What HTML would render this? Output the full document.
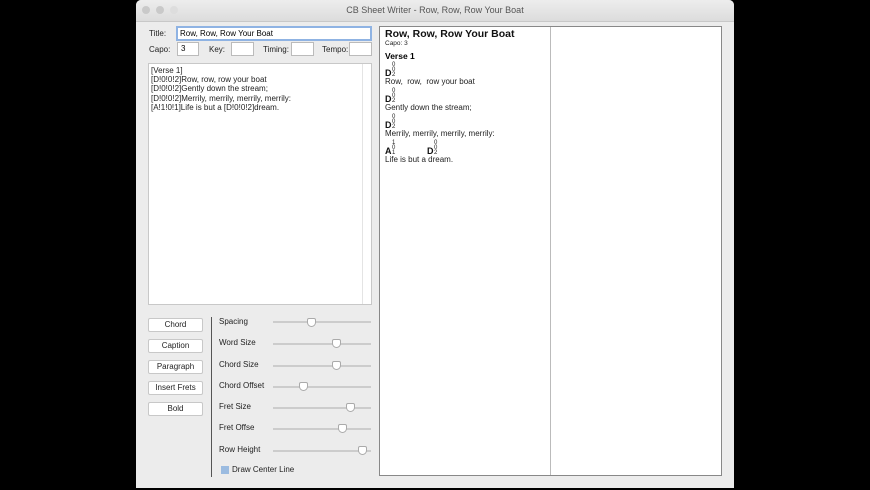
<!DOCTYPE html>
<html><head><style>
body{margin:0;width:870px;height:490px;background:#000;font-family:"Liberation Sans",sans-serif;position:relative;overflow:hidden}
.a{position:absolute}
.win{left:136px;top:0;width:598px;height:488px;background:#ececec;border-radius:5px 5px 0 0}
.tb{left:0;top:0;width:598px;height:21px;background:linear-gradient(#ededed,#dcdcdc);border-bottom:1px solid #c8c8c8;border-radius:5px 5px 0 0;font-size:9px;color:#555;text-align:center;line-height:21px}
.dot{width:8px;height:8px;border-radius:50%;background:#c9c9c9;top:6px}
.lb{font-size:8px;color:#222}
.in{background:#fff;border:1px solid #bbb;height:14px;box-sizing:border-box}
.btn{width:53px;height:12px;background:#fff;border:1px solid #c8c8c8;border-radius:2px;font-size:8px;text-align:center;line-height:12px;color:#222;left:148px}
.tr{height:2px;background:#ccc;left:273px;width:98px}
.th{width:9px;height:9px;background:#fff;border:1px solid #aaa;border-radius:2px 2px 50% 50%;box-sizing:border-box}
.p{font-size:8px;color:#222}
.s{font-size:6px;color:#222;line-height:5px}
.d{font-size:9px;font-weight:bold;color:#111}
</style></head><body>
<div class="a win">
<div class="a tb">CB Sheet Writer - Row, Row, Row Your Boat</div>
<div class="a dot" style="left:6px"></div><div class="a dot" style="left:20px"></div><div class="a dot" style="left:34px;background:#ddd"></div>
</div>
<div class="a lb" style="left:149px;top:29px">Title:</div>
<div class="a in" style="left:176px;top:26px;width:196px;height:15px;border:2px solid #8fb3e3;font-size:8px;padding-left:2px;line-height:11px">Row, Row, Row Your Boat</div>
<div class="a lb" style="left:149px;top:45px">Capo:</div>
<div class="a in" style="left:177px;top:42px;width:22px;font-size:8px;padding-left:3px;line-height:12px">3</div>
<div class="a lb" style="left:209px;top:45px">Key:</div>
<div class="a in" style="left:231px;top:42px;width:23px"></div>
<div class="a lb" style="left:263px;top:45px">Timing:</div>
<div class="a in" style="left:291px;top:42px;width:23px"></div>
<div class="a lb" style="left:322px;top:45px">Tempo:</div>
<div class="a in" style="left:349px;top:42px;width:23px"></div>
<div class="a" style="left:148px;top:63px;width:224px;height:242px;background:#fff;border:1px solid #c8c8c8;box-sizing:border-box"></div>
<div class="a" style="left:362px;top:64px;width:1px;height:240px;background:#e4e4e4"></div>
<div class="a p" style="left:151px;top:66px;line-height:9.2px">[Verse 1]<br>[D!0!0!2]Row, row, row your boat<br>[D!0!0!2]Gently down the stream;<br>[D!0!0!2]Merrily, merrily, merrily, merrily:<br>[A!1!0!1]Life is but a [D!0!0!2]dream.</div>
<div class="a btn" style="top:318px">Chord</div>
<div class="a btn" style="top:339px">Caption</div>
<div class="a btn" style="top:360px">Paragraph</div>
<div class="a btn" style="top:381px">Insert Frets</div>
<div class="a btn" style="top:402px">Bold</div>
<div class="a" style="left:211px;top:317px;width:1px;height:160px;background:#555"></div>
<div class="a lb" style="left:219px;top:317px">Spacing</div><div class="a tr" style="top:321px"></div><div class="a th" style="left:307px;top:318px"></div>
<div class="a lb" style="left:219px;top:338px">Word Size</div><div class="a tr" style="top:343px"></div><div class="a th" style="left:332px;top:339px"></div>
<div class="a lb" style="left:219px;top:360px">Chord Size</div><div class="a tr" style="top:365px"></div><div class="a th" style="left:332px;top:361px"></div>
<div class="a lb" style="left:219px;top:381px">Chord Offset</div><div class="a tr" style="top:386px"></div><div class="a th" style="left:299px;top:382px"></div>
<div class="a lb" style="left:219px;top:402px">Fret Size</div><div class="a tr" style="top:407px"></div><div class="a th" style="left:346px;top:403px"></div>
<div class="a lb" style="left:219px;top:423px">Fret Offse</div><div class="a tr" style="top:428px"></div><div class="a th" style="left:338px;top:424px"></div>
<div class="a lb" style="left:219px;top:445px">Row Height</div><div class="a tr" style="top:450px"></div><div class="a th" style="left:358px;top:446px"></div>
<div class="a" style="left:221px;top:466px;width:8px;height:8px;background:#9bbbe0"></div>
<div class="a lb" style="left:232px;top:465px">Draw Center Line</div>
<div class="a" style="left:379px;top:26px;width:343px;height:450px;background:#fff;border:1px solid #888;box-sizing:border-box"></div>
<div class="a" style="left:550px;top:27px;width:1px;height:448px;background:#bbb"></div>
<div class="a" style="left:385px;top:28px;font-size:10.5px;font-weight:bold;color:#111">Row, Row, Row Your Boat</div>
<div class="a s" style="left:385px;top:41px;font-size:6.5px">Capo: 3</div>
<div class="a" style="left:385px;top:51px;font-size:8.5px;font-weight:bold">Verse 1</div>
<div class="a s" style="left:392px;top:63px">0<br>0<br>2</div><div class="a d" style="left:385px;top:68px">D</div>
<div class="a p" style="left:385px;top:77px">Row,&nbsp; row,&nbsp; row your boat</div>
<div class="a s" style="left:392px;top:89px">0<br>0<br>2</div><div class="a d" style="left:385px;top:94px">D</div>
<div class="a p" style="left:385px;top:103px">Gently down the stream;</div>
<div class="a s" style="left:392px;top:115px">0<br>0<br>2</div><div class="a d" style="left:385px;top:120px">D</div>
<div class="a p" style="left:385px;top:129px">Merrily, merrily, merrily, merrily:</div>
<div class="a s" style="left:392px;top:141px">1<br>0<br>1</div><div class="a d" style="left:385px;top:146px">A</div>
<div class="a s" style="left:434px;top:141px">0<br>0<br>2</div><div class="a d" style="left:427px;top:146px">D</div>
<div class="a p" style="left:385px;top:155px">Life is but a dream.</div>
</body></html>
